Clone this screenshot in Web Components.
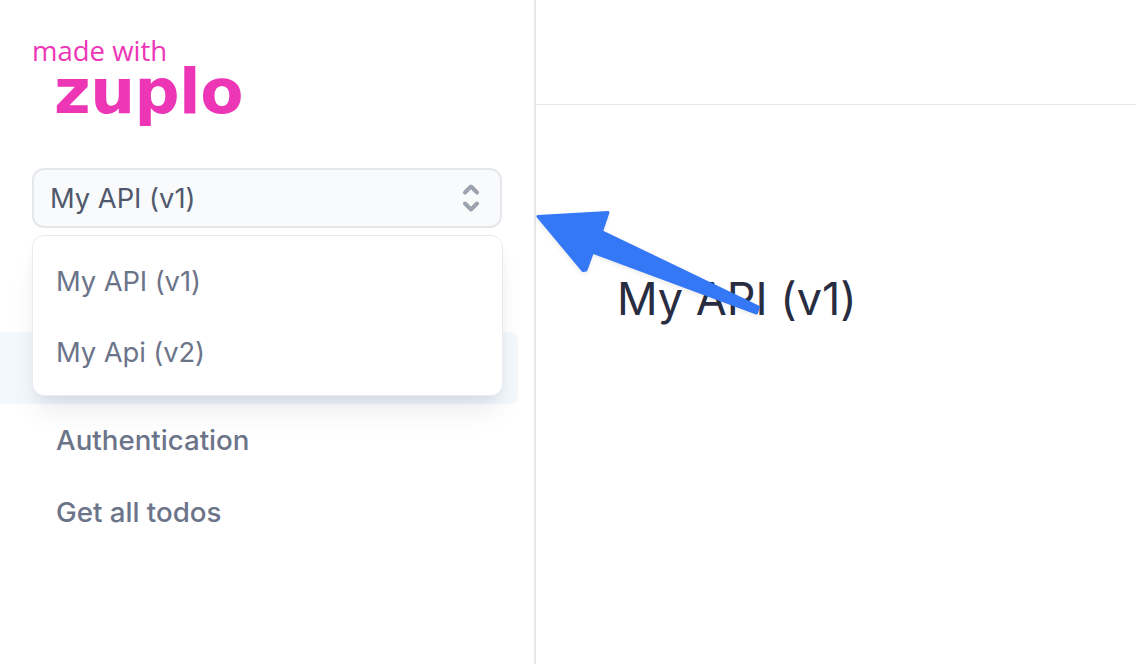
<!DOCTYPE html>
<html lang="en">
<head>
<meta charset="utf-8">
<title>My API (v1)</title>
<style>
  html, body { margin: 0; height: 100%; background: #fff; font-family: Inter, "Liberation Sans", sans-serif; }
</style>
</head>
<body>
<docs-page>
  <docs-sidebar>
    <made-with-logo slot="logo"></made-with-logo>
    <version-select slot="select" value="My API (v1)">
      <version-option>My API (v1)</version-option>
      <version-option>My Api (v2)</version-option>
    </version-select>
    <nav-item active></nav-item>
    <nav-item>Authentication</nav-item>
    <nav-item>Get all todos</nav-item>
  </docs-sidebar>
  <docs-main>My API (v1)</docs-main>
  <arrow-note></arrow-note>
</docs-page>

<script>
class DocsPage extends HTMLElement {
  constructor() {
    super();
    this.attachShadow({ mode: 'open' });
    this.shadowRoot.innerHTML = `
    <style>
      :host { display: flex; position: relative; width: 1136px; height: 664px; overflow: hidden; background: #fff; }
    </style>
    <slot></slot>
    `;
  }
}

class DocsSidebar extends HTMLElement {
  constructor() {
    super();
    this.attachShadow({ mode: 'open' });
    this.shadowRoot.innerHTML = `
    <style>
      :host { display: flex; flex-direction: column; flex: none; box-sizing: border-box; width: 536px; height: 664px; border-right: 2px solid #e5e7eb; }
      .top { display: flex; flex-direction: column; height: 168px; }
      .select { padding: 0 32px; height: 60px; }
      nav { display: flex; flex-direction: column; margin-top: 104px; padding-right: 16px; }
    </style>
    <div class="top"><slot name="logo"></slot></div>
    <div class="select"><slot name="select"></slot></div>
    <nav><slot></slot></nav>
    `;
  }
}

class MadeWithLogo extends HTMLElement {
  constructor() {
    super();
    this.attachShadow({ mode: 'open' });
    this.shadowRoot.innerHTML = `
    <style>
      :host { display: block; padding: 36px 0 0 32px; color: #ec36b6; }
      .made { font: 400 27.500px/30px "Open Sans", sans-serif; }
      .name { font: 700 63px/52px "DejaVu Sans", sans-serif; margin: 0 0 0 22px; letter-spacing: -.5px; }
    </style>
    <div class="made">made with</div>
    <div class="name">zuplo</div>
    `;
  }
}

class VersionSelect extends HTMLElement {
  constructor() {
    super();
    this.attachShadow({ mode: 'open' });
    this.shadowRoot.innerHTML = `
    <style>
      :host { display: block; position: relative; }
      .box { display: flex; align-items: center; justify-content: space-between; box-sizing: border-box; height: 60px; padding: 0 19px 0 16px; background: #f9fafb; border: 2px solid #e5e7eb; border-radius: 12px; font-size: 27.300px; color: #4f586c; }
      svg { width: 20px; height: 32px; display: block; }
      .menu { position: absolute; top: 67px; left: 0; right: -1px; box-sizing: border-box; height: 161px; padding: 9px 0 8px; background: #fff; border: 1px solid #e9ebef; border-radius: 12px; box-shadow: 0 20px 30px -6px rgba(17,24,60,.08), 0 8px 12px -4px rgba(17,24,60,.07); z-index: 2; }
    </style>
    <div class="box">
      <span class="value"></span>
      <svg viewBox="0 0 20 32" fill="none" stroke="#9ca3af" stroke-width="4" stroke-linecap="round" stroke-linejoin="round">
        <path d="M4 10.500 10 4.500 16 10.500"/>
        <path d="M4 21.500 10 27.500 16 21.500"/>
      </svg>
    </div>
    <div class="menu"><slot></slot></div>
    `;
  }

  connectedCallback() {
    this.shadowRoot.querySelector('.value').textContent = this.getAttribute('value');
  }
}

class VersionOption extends HTMLElement {
  constructor() {
    super();
    this.attachShadow({ mode: 'open' });
    this.shadowRoot.innerHTML = `
    <style>
      :host { display: flex; align-items: center; height: 71px; padding-left: 23px; font-size: 27.400px; letter-spacing: -.1px; color: #6c748a; }
    </style>
    <slot></slot>
    `;
  }
}

class NavItem extends HTMLElement {
  constructor() {
    super();
    this.attachShadow({ mode: 'open' });
    this.shadowRoot.innerHTML = `
    <style>
      :host { display: flex; align-items: center; height: 72px; padding-left: 56px; border-radius: 0 8px 8px 0; font-size: 27.700px; font-weight: 500; color: #6c748a; }
      :host([active]) { background: #f3f8fd; }
    </style>
    <slot></slot>
    `;
  }
}

class DocsMain extends HTMLElement {
  constructor() {
    super();
    this.attachShadow({ mode: 'open' });
    this.shadowRoot.innerHTML = `
    <style>
      :host { display: block; flex: 1; }
      header { height: 104px; border-bottom: 1px solid #e5e7eb; }
      h1 { margin: 164px 0 0 81px; font-size: 45px; line-height: 60px; font-weight: 400; color: #282d42; }
    </style>
    <header></header>
    <h1><slot></slot></h1>
    `;
  }
}

// annotation arrow drawn on top of the page
class ArrowNote extends HTMLElement {
  constructor() {
    super();
    this.attachShadow({ mode: 'open' });
    this.shadowRoot.innerHTML = `
    <style>
      :host { position: absolute; inset: 0; pointer-events: none; z-index: 3; }
      svg { display: block; width: 1136px; height: 664px; filter: drop-shadow(0 2px 2px rgba(0,0,0,.08)); }
    </style>
    <svg viewBox="0 0 1136 664">
      <path d="M538 216.500 L608 212.500 L601.500 231.500 L758.500 307 L756.500 313 L592.500 252 L586 270 L583 270.500 Z"
        fill="#3478f6" stroke="#3478f6" stroke-width="3" stroke-linejoin="round"/>
    </svg>
    `;
  }
}

customElements.define('docs-page', DocsPage);
customElements.define('docs-sidebar', DocsSidebar);
customElements.define('made-with-logo', MadeWithLogo);
customElements.define('version-select', VersionSelect);
customElements.define('version-option', VersionOption);
customElements.define('nav-item', NavItem);
customElements.define('docs-main', DocsMain);
customElements.define('arrow-note', ArrowNote);
</script>
</body>
</html>
